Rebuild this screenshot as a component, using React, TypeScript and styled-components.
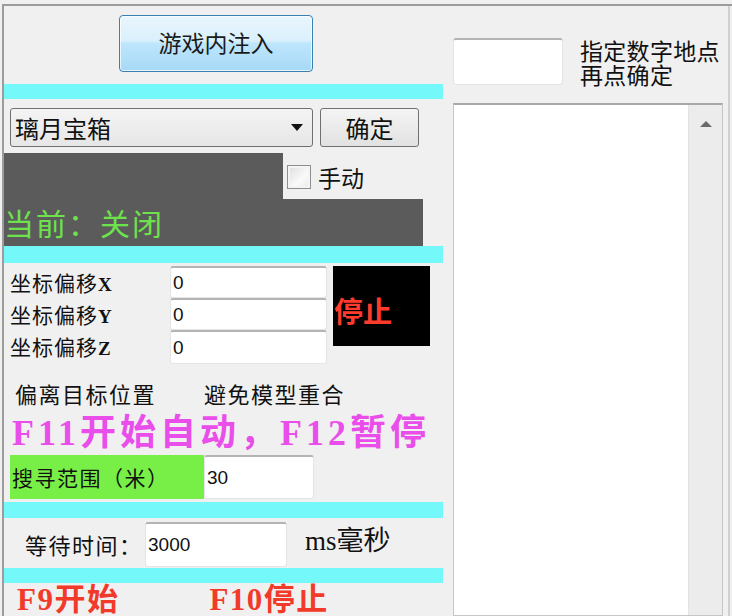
import styled, { createGlobalStyle } from "styled-components";

const GlobalStyle = createGlobalStyle`
  html, body {
    margin: 0;
    padding: 0;
    background: #f0f0f0;
    overflow: hidden;
  }
  * {
    box-sizing: border-box;
  }
`;

const CJK = `"Noto Sans CJK SC", "Noto Sans", sans-serif`;
const SERIF_CJK = `"Liberation Serif", "Noto Sans CJK SC", serif`;

const Frame = styled.div`
  width: 732px;
  height: 616px;
  padding-top: 4px;
  background: #f0f0f0;
  font-family: ${CJK};
  color: #111;
  overflow: hidden;
`;

const Window = styled.div`
  margin-left: 2px;
  height: 612px;
  display: flex;
  overflow: hidden;
  border-top: 2px solid #9c9c9c;
  border-left: 2px solid #9c9c9c;
`;

const LeftPanel = styled.div`
  width: 439px;
  display: flex;
  flex-direction: column;

  & > * {
    flex-shrink: 0;
  }
`;

const RightPanel = styled.div`
  flex: 1;
  display: flex;
  flex-direction: column;
  padding-left: 10px;
  border-right: 2px solid #cfcfcf;
  margin-right: 2px;
`;

const CyanBar = styled.div<{ $h: number; $mt?: number }>`
  height: ${(p) => p.$h}px;
  margin-top: ${(p) => p.$mt ?? 0}px;
  background: #74f8fa;
`;

const InjectRow = styled.div`
  height: 78px;
  padding: 9px 0 0 115px;
`;

const InjectButton = styled.button`
  width: 194px;
  height: 57px;
  border: 1px solid #3c7fb1;
  border-radius: 4px;
  background: linear-gradient(#eaf6fd 0%, #d9f0fc 45%, #bee6fd 50%, #a7d9f5 100%);
  box-shadow: inset 0 0 0 1px rgba(255, 255, 255, 0.7);
  font-family: ${CJK};
  font-size: 23px;
  color: #1a1a1a;
  padding: 0 0 4px;
`;

const ComboRow = styled.div`
  margin-top: 9px;
  height: 39px;
  padding-left: 6px;
  display: flex;
  gap: 7px;
`;

const Combo = styled.div`
  width: 303px;
  height: 39px;
  border: 1px solid #707070;
  border-radius: 3px;
  background: linear-gradient(#f4f4f4, #e6e6e6);
  display: flex;
  align-items: center;
  justify-content: space-between;
  padding: 0 9px 0 4px;
  font-size: 24px;
`;

const Arrow = styled.span`
  width: 0;
  height: 0;
  border-left: 6px solid transparent;
  border-right: 6px solid transparent;
  border-top: 7px solid #111;
`;

const PlainButton = styled.button`
  width: 99px;
  height: 39px;
  border: 1px solid #707070;
  border-radius: 3px;
  background: linear-gradient(#f4f4f4, #e2e2e2);
  font-family: ${CJK};
  font-size: 24px;
  color: #111;
  padding: 0;
`;

const StatusBlock = styled.div`
  margin-top: 6px;
  display: flex;
  flex-direction: column;
`;

const StatusTop = styled.div`
  height: 46px;
  display: flex;
`;

const DarkTab = styled.div`
  width: 279px;
  background: #5b5b5b;
`;

const CheckLabel = styled.label`
  display: flex;
  align-items: center;
  gap: 7px;
  padding: 12px 0 0 4px;
  align-self: flex-start;
  font-size: 23px;
  line-height: 24px;
`;

const CheckBox = styled.span`
  width: 24px;
  height: 24px;
  border: 1px solid #8e8f8f;
  background: linear-gradient(135deg, #dcdcdc, #fafafa 60%, #e8e8e8);
  box-shadow: inset 0 0 0 2px #f4f4f4;
`;

const DarkStrip = styled.div`
  width: 419px;
  height: 47px;
  background: #5b5b5b;
  color: #6ee24c;
  font-size: 30px;
  line-height: 47px;
  letter-spacing: 2px;
`;

const OffsetGrid = styled.div`
  margin-top: 3px;
  padding-left: 6px;
  display: grid;
  grid-template-columns: 160px 157px 97px;
  grid-template-rows: 32px 32px 34px;
`;

const OffsetLabel = styled.div<{ $row: number }>`
  grid-row: ${(p) => p.$row};
  grid-column: 1;
  font-size: 21px;
  line-height: 32px;
  letter-spacing: 1px;
  white-space: nowrap;
`;

const OffsetInput = styled.div<{ $row: number }>`
  grid-row: ${(p) => p.$row};
  grid-column: 2;
`;

const Axis = styled.span`
  font-family: ${SERIF_CJK};
  font-weight: bold;
  font-size: 19px;
`;

const NumInput = styled.div<{ $w: number; $h: number }>`
  width: ${(p) => p.$w}px;
  height: ${(p) => p.$h}px;
  background: #fff;
  border: 1px solid #e4e4e4;
  border-top: 2px solid #b4b4b4;
  border-radius: 3px;
  font-family: "Liberation Sans", Arial, sans-serif;
  font-size: 19px;
  display: flex;
  align-items: center;
  padding-left: 2px;
  color: #111;
`;

const StopBox = styled.div`
  grid-column: 3;
  grid-row: 1 / 4;
  margin-left: 6px;
  width: 97px;
  height: 80px;
  background: #000;
  color: #ff3b2c;
  font-size: 29px;
  font-weight: bold;
  display: flex;
  align-items: center;
  padding: 8px 0 0 1px;
`;

const TipRow = styled.div`
  margin-top: 12px;
  height: 34px;
  padding-left: 11px;
  display: flex;
  gap: 48px;
  font-size: 22px;
  line-height: 34px;
  letter-spacing: 1.5px;
`;

const Headline = styled.div`
  height: 45px;
  padding-left: 8px;
  font-family: ${SERIF_CJK};
  font-weight: bold;
  font-size: 36px;
  line-height: 46px;
  letter-spacing: 4px;
  color: #ea4eea;
  white-space: nowrap;
`;

const SearchRow = styled.div`
  height: 44px;
  padding-left: 6px;
  display: flex;
`;

const GreenLabel = styled.div`
  width: 194px;
  background: #78ef46;
  font-size: 21px;
  line-height: 44px;
  letter-spacing: 1.5px;
  padding-left: 2px;
`;

const WaitRow = styled.div`
  height: 50px;
  padding: 4px 0 0 21px;
  display: flex;
  align-items: flex-start;
`;

const WaitLabel = styled.div`
  width: 120px;
  font-size: 22px;
  line-height: 45px;
  letter-spacing: 1.5px;
`;

const Unit = styled.div`
  margin-left: 18px;
  font-size: 27px;
  line-height: 38px;
  font-family: ${SERIF_CJK};
`;

const HotkeyRow = styled.div`
  height: 33px;
  padding-left: 13px;
  display: flex;
  gap: 90px;
  font-family: ${SERIF_CJK};
  font-weight: bold;
  font-size: 31px;
  line-height: 33px;
  letter-spacing: 1.5px;
  color: #f23a2a;
  white-space: nowrap;
`;

const PickRow = styled.div`
  margin-top: 32px;
  display: flex;
  gap: 17px;
`;

const PickText = styled.div`
  font-size: 23px;
  line-height: 24px;
  letter-spacing: 0.3px;
`;

const ListBox = styled.div`
  margin-top: 17px;
  width: 270px;
  flex: 1;
  display: flex;
  background: #fff;
  border: 1px solid #c6c6c6;
  border-top: 2px solid #a8a8a8;
`;

const ListBody = styled.div`
  flex: 1;
`;

const ScrollBar = styled.div`
  width: 34px;
  background: #ececec;
  border-left: 1px solid #e2e2e2;
  display: flex;
  justify-content: center;
  padding-top: 16px;
`;

const UpArrow = styled.span`
  width: 0;
  height: 0;
  border-left: 6px solid transparent;
  border-right: 6px solid transparent;
  border-bottom: 6px solid #6a6a6a;
`;

const axes = ["X", "Y", "Z"];

export default function App() {
  return (
    <>
      <GlobalStyle />
      <Frame>
        <Window>
          <LeftPanel>
            <InjectRow>
              <InjectButton>游戏内注入</InjectButton>
            </InjectRow>
            <CyanBar $h={15} />
            <ComboRow>
              <Combo>
                <span>璃月宝箱</span>
                <Arrow />
              </Combo>
              <PlainButton>确定</PlainButton>
            </ComboRow>
            <StatusBlock>
              <StatusTop>
                <DarkTab />
                <CheckLabel>
                  <CheckBox />
                  手动
                </CheckLabel>
              </StatusTop>
              <DarkStrip>当前：关闭</DarkStrip>
            </StatusBlock>
            <CyanBar $h={17} />
            <OffsetGrid>
              {axes.map((a, i) => (
                <OffsetLabel key={`l${a}`} $row={i + 1}>
                  坐标偏移<Axis>{a}</Axis>
                </OffsetLabel>
              ))}
              {axes.map((a, i) => (
                <OffsetInput key={`i${a}`} $row={i + 1}>
                  <NumInput $w={157} $h={i === 2 ? 34 : 32}>
                    0
                  </NumInput>
                </OffsetInput>
              ))}
              <StopBox>停止</StopBox>
            </OffsetGrid>
            <TipRow>
              <span>偏离目标位置</span>
              <span>避免模型重合</span>
            </TipRow>
            <Headline>F11开始自动，F12暂停</Headline>
            <SearchRow>
              <GreenLabel>搜寻范围（米）</GreenLabel>
              <NumInput $w={110} $h={44}>30</NumInput>
            </SearchRow>
            <CyanBar $h={16} $mt={3} />
            <WaitRow>
              <WaitLabel>等待时间：</WaitLabel>
              <NumInput $w={142} $h={45}>3000</NumInput>
              <Unit>ms毫秒</Unit>
            </WaitRow>
            <CyanBar $h={15} />
            <HotkeyRow>
              <span>F9开始</span>
              <span>F10停止</span>
            </HotkeyRow>
          </LeftPanel>
          <RightPanel>
            <PickRow>
              <NumInput $w={110} $h={47} />
              <PickText>
                指定数字地点
                <br />
                再点确定
              </PickText>
            </PickRow>
            <ListBox>
              <ListBody />
              <ScrollBar>
                <UpArrow />
              </ScrollBar>
            </ListBox>
          </RightPanel>
        </Window>
      </Frame>
    </>
  );
}
